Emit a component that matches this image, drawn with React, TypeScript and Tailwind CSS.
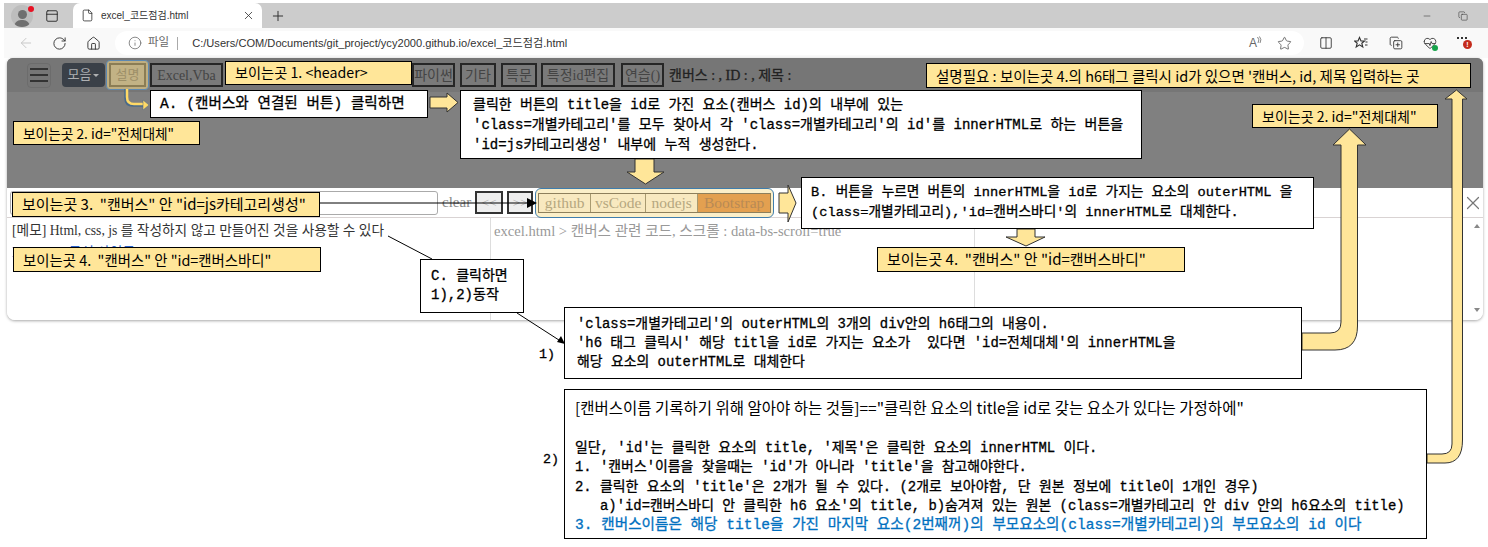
import React from "react";
import { ArrowLeft, RotateCw, Home, Info, Star, Columns2, X, Plus, Minus, File, PanelTop, HeartPulse, Copy, CopyPlus } from "lucide-react";

const mono = "font-['Liberation_Mono','Noto_Sans_CJK_KR',monospace] text-black whitespace-pre [-webkit-text-stroke:0.3px_currentColor]";
const note = "absolute z-20 border border-black bg-[#ffe699] font-['Noto_Sans_CJK_KR','Noto_Sans',sans-serif] text-black whitespace-pre flex items-center";
const box = "absolute z-20 border border-black bg-white " + mono;
const btn = "h-[24px] border-2 border-[#262626] bg-[#7a7a7a] text-[#444] flex items-center justify-center text-[14px] font-['Liberation_Serif','Noto_Sans_CJK_KR',serif] whitespace-pre";
const tab = "h-full flex items-center justify-center text-[15.5px] font-['Liberation_Serif','Noto_Sans_CJK_KR',serif] text-[#b5a77f]";

export default function App() {
  return (
    <div className="relative w-[1488px] h-[547px] overflow-hidden bg-white font-['Liberation_Sans','Noto_Sans_CJK_KR',sans-serif]">
      {/* Browser tab strip */}
      <div className="mt-[3px] ml-[4px] h-[25px] bg-[#cccccc] flex items-center">
        <div className="relative ml-[7px] w-[22px] h-[22px] rounded-full bg-[#bdbdbd] overflow-hidden flex flex-col items-center justify-end">
          <div className="w-[9px] h-[9px] rounded-full bg-[#6f6f6f]" />
          <div className="w-[16px] h-[7px] mt-[1px] rounded-t-full bg-[#6f6f6f]" />
        </div>
        <div className="w-[6px] h-[6px] rounded-full bg-[#e81123] -ml-[5px] -mt-[13px] z-10" />
        <PanelTop className="ml-[11px] w-[14px] h-[14px] text-[#222]" strokeWidth={1.5} />
        <div className="ml-[14px] w-[189px] h-full bg-white rounded-t-[7px] flex items-center">
          <File className="ml-[8px] w-[13px] h-[15px] text-[#222]" strokeWidth={1.4} />
          <span className="ml-[7px] text-[10px] text-[#333] whitespace-pre">excel_코드점검.html</span>
          <X className="ml-auto mr-[7px] w-[13px] h-[13px] text-[#333]" strokeWidth={1.5} />
        </div>
        <Plus className="ml-[8px] w-[16px] h-[16px] text-[#333]" strokeWidth={1.5} />
        <Minus className="ml-auto w-[10px] h-[10px] text-[#444]" strokeWidth={1.5} />
        <Copy className="ml-[26px] mr-[20px] w-[10px] h-[10px] text-[#444]" strokeWidth={1.5} />
      </div>
      {/* Address bar */}
      <div className="h-[30px] ml-[4px] bg-[#f9f9f9] flex items-center">
        <ArrowLeft className="ml-[14px] w-[16px] h-[16px] text-[#c9c9c9]" strokeWidth={1.5} />
        <RotateCw className="ml-[18px] w-[15px] h-[15px] text-[#333]" strokeWidth={1.5} />
        <Home className="ml-[19px] w-[15px] h-[15px] text-[#333]" strokeWidth={1.5} />
        <div className="ml-[14px] w-[1189px] h-[24px] bg-white rounded-full flex items-center">
          <Info className="ml-[13px] w-[14px] h-[14px] text-[#666]" strokeWidth={1.3} />
          <span className="ml-[6px] text-[11.5px] text-[#666] whitespace-pre">파일</span>
          <span className="ml-[8px] w-px h-[13px] bg-[#aaa]" />
          <span className="ml-[14px] text-[11.1px] text-[#333] whitespace-pre">C:/Users/COM/Documents/git_project/ycy2000.github.io/excel_코드점검.html</span>
          <span className="ml-auto text-[12px] text-[#666] whitespace-pre">A</span>
          <svg className="w-[5px] h-[8px] -mt-[6px] text-[#666]" viewBox="0 0 5 8" fill="none" stroke="currentColor" strokeWidth="0.8">
            <path d="M0.5 1Q3 3.5 1 7" />
            <path d="M2.5 0.5Q5 3.5 3 7" />
          </svg>
          <Star className="ml-[15px] mr-[12px] w-[15px] h-[15px] text-[#555]" strokeWidth={1.3} />
        </div>
        <Columns2 className="ml-[15px] w-[14px] h-[14px] text-[#333]" strokeWidth={1.5} />
        <svg className="ml-[21px] w-[14px] h-[14px] text-[#333]" viewBox="0 0 14 14" fill="none" stroke="currentColor" strokeWidth="1.1">
          <path d="M5.5 1.5L7 5H10.5L7.8 7.2L8.8 11L5.5 8.8L2.2 11L3.2 7.2L0.5 5H4Z" />
          <path d="M10 3H13.5M11.5 6H13.5M11 9H13.5" />
        </svg>
        <CopyPlus className="ml-[21px] w-[14px] h-[14px] text-[#333]" strokeWidth={1.5} />
        <div className="relative ml-[20px]">
          <HeartPulse className="w-[14px] h-[14px] text-[#333]" strokeWidth={1.5} />
          <span className="absolute -right-[1px] -bottom-[1px] w-[6px] h-[6px] rounded-full bg-[#16a34a]" />
        </div>
        <div className="relative ml-[20px] w-[14px] h-[14px]">
          <div className="flex gap-[2px] pt-[1px]">
            <span className="w-[2px] h-[2px] bg-[#333]" />
            <span className="w-[2px] h-[2px] bg-[#333]" />
            <span className="w-[2px] h-[2px] bg-[#333]" />
          </div>
          <span className="absolute -right-[1px] top-[4px] w-[9px] h-[9px] rounded-full bg-[#c42b1c] text-white text-[7px] leading-[9px] text-center font-bold">!</span>
        </div>
      </div>

      {/* Page */}
      <div className="ml-[7px] w-[1476px] h-[262px] rounded-t-[6px] rounded-b-[8px] overflow-hidden shadow-[0_1px_3px_rgba(0,0,0,0.35)] flex flex-col">
        <div className="h-[130px] bg-[#808080] shrink-0">
          <div className="h-[34px] bg-[#767676] flex items-center pl-[20px]">
            <div className="w-[24px] h-[25px] border border-[#6c6c6c] rounded-[4px] flex flex-col items-center justify-center gap-[4px]">
              <span className="w-[18px] h-[2px] bg-[#333]" />
              <span className="w-[18px] h-[2px] bg-[#333]" />
              <span className="w-[18px] h-[2px] bg-[#333]" />
            </div>
            <div className="ml-[11px] w-[43px] h-[24px] rounded-[4px] bg-[#3a4048] text-[#aeb0b2] text-[13px] flex items-center justify-center gap-[2px]">
              모음<span className="w-0 h-0 border-x-[3px] border-x-transparent border-t-[3px] border-t-[#aeb0b2]" />
            </div>
            <div className="ml-[1px] w-[43px] h-[30px] rounded-[4px] border border-[#5d88b0] bg-[#bfae80] p-[2px] flex">
              <div className="flex-1 border-2 border-[#8b7d55] bg-[#c2b285] text-[#9d8f68] text-[13px] flex items-center justify-center font-['Liberation_Serif','Noto_Sans_CJK_KR',serif]">설명</div>
            </div>
            <div className={btn + " ml-[1px] w-[73px] text-[#333] text-[14.5px]"}>Excel,Vba</div>
            <div className={btn + " ml-[189px] w-[43px]"}>파이썬</div>
            <div className={btn + " ml-[5px] w-[36px]"}>기타</div>
            <div className={btn + " ml-[5px] w-[36px]"}>특문</div>
            <div className={btn + " ml-[4px] w-[74px]"}>특정id편집</div>
            <div className={btn + " ml-[6px] w-[43px]"}>연습()</div>
            <span className="ml-[5px] text-[14px] text-[#222] font-['Liberation_Serif','Noto_Sans_CJK_KR',serif] whitespace-pre [-webkit-text-stroke:0.3px_#222]">캔버스 : , ID : , 제목 :</span>
          </div>
        </div>
        {/* Canvas toolbar */}
        <div className="h-[30px] shrink-0 bg-white border-b border-[#d9d3d3] flex items-center">
          <div className="ml-[3px] w-[428px] h-[24px] border border-[#aaa] rounded-[3px]" />
          <span className="ml-[4px] text-[15px] text-[#888] font-['Liberation_Serif',serif]">clear</span>
          <div className="ml-[4px] w-[28px] h-[23px] border-2 border-[#333] bg-[#eee] text-[#aaa] text-[13px] flex items-center justify-center font-['Liberation_Serif',serif]">&lt;&lt;</div>
          <div className="ml-[4px] w-[26px] h-[23px] border-2 border-[#333] bg-[#eee] text-[#aaa] text-[13px] flex items-center justify-center font-['Liberation_Serif',serif]">&gt;&gt;</div>
          <div className="ml-[2px] w-[239px] h-[30px] rounded-[6px] border-[1.5px] border-[#3f7dad] bg-[#fbefc9] px-[2px] py-[4px] flex items-center">
            <div className="w-full h-full border border-[#8d7f5c] bg-[#f8e9c0] flex">
              <div className={tab + " w-[52px] border-r border-[#a89a70]"}>github</div>
              <div className={tab + " w-[55px] border-r border-[#a89a70]"}>vsCode</div>
              <div className={tab + " w-[52px] border-r border-[#a89a70]"}>nodejs</div>
              <div className={tab + " flex-1 bg-[#e3a050] text-[#b88a55]"}>Bootstrap</div>
            </div>
          </div>
          <X className="ml-auto -mr-[1px] w-[22px] h-[22px] text-[#777]" strokeWidth={1.3} />
        </div>
        {/* Canvas body */}
        <div className="flex-1 bg-white flex font-['Liberation_Serif','Noto_Sans_CJK_KR',serif]">
          <div className="w-[484px] border-r border-[#ddd] pl-[5px] pt-[3px]">
            <div className="text-[13.7px] text-[#333] whitespace-pre">[메모] Html, css, js 를 작성하지 않고 만들어진 것을 사용할 수 있다</div>
            <div className="text-[13.7px] text-[#2a62c9] whitespace-pre mt-[1px]">Bootstrap 공식 사이트</div>
          </div>
          <div className="w-[484px] border-r border-[#ddd] pl-[3px] pt-[3px] text-[14.6px] text-[#999] whitespace-pre">excel.html &gt; 캔버스 관련 코드, 스크롤 : data-bs-scroll=true</div>
          <div className="flex-1 relative">
            <span className="absolute right-[3px] top-[6px] w-0 h-0 border-x-[3px] border-x-transparent border-b-[4px] border-b-[#888]" />
            <span className="absolute right-[3px] bottom-[8px] w-0 h-0 border-x-[3px] border-x-transparent border-t-[4px] border-t-[#888]" />
          </div>
        </div>
      </div>

      {/* Annotation arrows */}
      <svg className="absolute inset-0 z-10 pointer-events-none" width="1488" height="547" viewBox="0 0 1488 547">
        <g fill="#ffe699" stroke="#333" strokeWidth="1">
          <path d="M430 97H447V93L458 102.5L447 112V108H430Z" />
          <path d="M635 159H654V172H664L645.5 184L627 172H635Z" />
          <path d="M779 193H788V185L796 203L788 222V213H779Z" />
          <path d="M1017 229H1035V237H1045L1026 246L1006 237H1017Z" />
          <path d="M1349.5 129L1366 145H1357.5V326Q1357.5 350 1335 350H1302V333H1330Q1341 333 1341 322V145H1333Z" />
          <path d="M1456.5 90L1467 99H1462.5V440Q1462.5 463 1445 463H1427V454H1442Q1452 454 1452 444V99H1445Z" />
        </g>
        <path d="M126 89V98Q126 105 133 105H144" fill="none" stroke="#4a6a8a" strokeWidth="3.5" />
        <path d="M127 89V97Q127 104 134 104H144" fill="none" stroke="#ffd966" strokeWidth="2.5" />
        <path d="M143 100L149 105L143 110Z" fill="#ffd966" stroke="#4a6a8a" strokeWidth="0.5" />
        <g stroke="#000" strokeWidth="1" fill="none">
          <path d="M320 203H533" />
          <path d="M388 236L432 259" />
          <path d="M517 313L562 342" />
        </g>
        <path d="M527 198L537 203L527 208Z" fill="#000" />
        <path d="M557 342L565 344L561 336Z" fill="#000" />
      </svg>

      {/* Yellow notes */}
      <div className={note + " left-[225px] top-[61px] w-[187px] h-[24px] pl-[9px] text-[14.2px]"}>보이는곳 1. &lt;header&gt;</div>
      <div className={note + " left-[13px] top-[121px] w-[187px] h-[24px] pl-[9px] text-[13.7px]"}>보이는곳 2. id="전체대체"</div>
      <div className={note + " left-[926px] top-[63px] w-[545px] h-[25px] pl-[9px] text-[14.5px]"}>설명필요 : 보이는곳 4.의 h6태그 클릭시 id가 있으면 '캔버스, id, 제목 입력하는 곳</div>
      <div className={note + " left-[1252px] top-[104px] w-[186px] h-[24px] pl-[9px] text-[14px]"}>보이는곳 2. id="전체대체"</div>
      <div className={note + " left-[12px] top-[192px] w-[308px] h-[25px] pl-[9px] text-[15px]"}>보이는곳 3.  "캔버스" 안 "id=js카테고리생성"</div>
      <div className={note + " left-[13px] top-[247px] w-[308px] h-[25px] pl-[9px] text-[14.4px]"}>보이는곳 4.  "캔버스" 안 "id=캔버스바디"</div>
      <div className={note + " left-[877px] top-[247px] w-[308px] h-[25px] pl-[9px] text-[15px]"}>보이는곳 4.  "캔버스" 안 "id=캔버스바디"</div>

      {/* White explanation boxes */}
      <div className={box + " left-[150px] top-[90px] w-[278px] h-[28px] pl-[9px] leading-[26px] text-[14.6px]"}>A. (캔버스와 연결된 버튼) 클릭하면</div>
      <div className={box + " left-[460px] top-[90px] w-[682px] h-[69px] pl-[12px] pt-[4px] leading-[20px] text-[14px]"}>{"클릭한 버튼의 title을 id로 가진 요소(캔버스 id)의 내부에 있는\n'class=개별카테고리'를 모두 찾아서 각 'class=개별카테고리'의 id'를 innerHTML로 하는 버튼을\n'id=js카테고리생성' 내부에 누적 생성한다."}</div>
      <div className={box + " left-[801px] top-[177px] w-[513px] h-[52px] pl-[9px] pt-[5px] leading-[20px] text-[13.7px]"}>{"B. 버튼을 누르면 버튼의 innerHTML을 id로 가지는 요소의 outerHTML 을\n(class=개별카테고리),'id=캔버스바디'의 innerHTML로 대체한다."}</div>
      <div className={box + " left-[420px] top-[259px] w-[104px] h-[54px] pl-[10px] pt-[7px] leading-[19px] text-[14px]"}>{"C. 클릭하면\n1),2)동작"}</div>
      <div className={box + " left-[564px] top-[307px] w-[738px] h-[72px] pl-[12px] pt-[7px] leading-[19px] text-[13.9px]"}>{"'class=개별카테고리'의 outerHTML의 3개의 div안의 h6태그의 내용이.\n'h6 태그 클릭시' 해당 titl을 id로 가지는 요소가  있다면 'id=전체대체'의 innerHTML을\n해당 요소의 outerHTML로 대체한다"}</div>
      <div className={box + " left-[564px] top-[389px] w-[863px] h-[150px] pl-[10px] pt-[7px] leading-[19.3px] text-[13.9px]"}>
        <div className="font-['Noto_Sans_CJK_KR',sans-serif] text-[15.5px] leading-[21px] [-webkit-text-stroke:0px]">[캔버스이름 기록하기 위해 알아야 하는 것들]=="클릭한 요소의 title을 id로 갖는 요소가 있다는 가정하에"</div>
        <div className="mt-[21px]">{"일단, 'id'는 클릭한 요소의 title, '제목'은 클릭한 요소의 innerHTML 이다.\n1. '캔버스'이름을 찾을때는 'id'가 아니라 'title'을 참고해야한다.\n2. 클릭한 요소의 'title'은 2개가 될 수 있다. (2개로 보아야함, 단 원본 정보에 title이 1개인 경우)\n   a)'id=캔버스바디 안 클릭한 h6 요소'의 title, b)숨겨져 있는 원본 (class=개별카테고리 안 div 안의 h6요소의 title)"}</div>
        <div className="text-[#0070c0] text-[14.6px]">3. 캔버스이름은 해당 title을 가진 마지막 요소(2번째꺼)의 부모요소의(class=개별카테고리)의 부모요소의 id 이다</div>
      </div>
      <span className={"absolute left-[539px] top-[345px] text-[13.33px] " + mono}>1)</span>
      <span className={"absolute left-[543px] top-[450px] text-[13.33px] " + mono}>2)</span>
    </div>
  );
}
